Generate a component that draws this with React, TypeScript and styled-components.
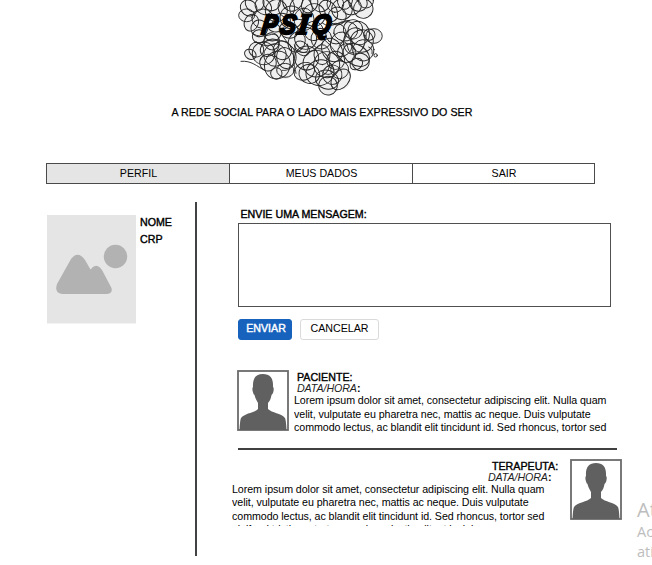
import React from 'react';
import styled, { createGlobalStyle } from 'styled-components';

const Global = createGlobalStyle`
  * { box-sizing: border-box; }
  html, body { margin: 0; background: #fff; overflow: hidden; }
  body { font-family: "Liberation Sans", Arial, sans-serif; font-size: 10.67px; color: #000; }
`;

const Page = styled.div`
  position: relative;
  width: 652px;
  height: 565px;
  overflow: hidden;
`;

const Header = styled.header`
  display: flex;
  flex-direction: column;
  height: 163px;
`;

const Logo = styled.svg`
  display: block;
  margin-left: 226px;
`;

const Text = styled.span<{ $track?: number; $heavy?: number }>`
  display: block;
  white-space: nowrap;
  line-height: 14px;
  letter-spacing: ${(p) => p.$track ?? 0}px;
  -webkit-text-stroke: ${(p) => p.$heavy ?? 0}px currentColor;
`;

const Tagline = styled(Text)`
  margin: 5px 0 0 171.5px;
`;

const Nav = styled.nav`
  display: grid;
  grid-template-columns: 183px 183px 181px;
  width: 549px;
  height: 21px;
  margin-left: 46px;
  border: 1px solid #4a4a4a;
`;

const Tab = styled.a<{ $active?: boolean }>`
  display: flex;
  align-items: center;
  justify-content: center;
  padding: 0 0 1px 1px;
  background: ${(p) => (p.$active ? '#e5e5e5' : '#fff')};
  border-right: 1px solid #4a4a4a;
  &:last-child { border-right: 0; }
`;

const Body = styled.main`
  display: grid;
  grid-template-columns: 148px 2px 1fr;
  margin: 18px 0 0 47px;
  height: 354px;
`;

const Profile = styled.aside`
  display: flex;
  gap: 4px;
  padding-top: 13px;
`;

const ProfileInfo = styled.div`
  display: flex;
  flex-direction: column;
  gap: 3px;
`;

const Rule = styled.div`
  background: #404244;
`;

const Content = styled.section`
  padding: 5px 0 0 41px;
`;

const FormLabel = styled(Text)`
  margin-left: 2.5px;
`;

const MessageBox = styled.div`
  width: 373px;
  height: 84px;
  margin-top: 2px;
  border: 1px solid #505050;
`;

const Actions = styled.div`
  display: flex;
  gap: 8px;
  margin-top: 12px;
`;

const Button = styled.button<{ $primary?: boolean }>`
  display: flex;
  align-items: center;
  justify-content: center;
  width: ${(p) => (p.$primary ? 54 : 79)}px;
  height: 21px;
  padding: 0 0 3px ${(p) => (p.$primary ? 2 : 0)}px;
  font: inherit;
  border-radius: 3px;
  color: ${(p) => (p.$primary ? '#fff' : '#000')};
  background: ${(p) => (p.$primary ? '#1762bd' : '#fff')};
  border: 1px solid ${(p) => (p.$primary ? '#1762bd' : '#dadada')};
`;

const Post = styled.article`
  display: flex;
  gap: 5px;
  height: 61px;
  margin: 30px 0 0 -1px;
`;

const Reply = styled.article`
  display: flex;
  gap: 12px;
  margin: 9px 0 0 -6px;
`;

const PostBody = styled.div<{ $right?: boolean }>`
  width: ${(p) => (p.$right ? '326px' : '330px')};
  height: ${(p) => (p.$right ? '66.5px' : '65px')};
  overflow: hidden;
`;

const PostHead = styled.div<{ $indent: number }>`
  padding: 0 0 0 ${(p) => p.$indent}px;
  height: 24px;
`;

const Stamp = styled(Text)<{ $shift?: number }>`
  margin: -3px 0 0 ${(p) => p.$shift ?? 0}px;
  color: #222;
  b { color: #000; }
`;

const Copy = styled.div<{ $nudge: number }>`
  padding-top: ${(p) => p.$nudge}px;
  ${Text} { line-height: 13.4px; }
`;

const Divider = styled.div`
  width: 379px;
  height: 2px;
  margin-top: 17px;
  background: #404040;
`;

const Notice = styled.div`
  position: absolute;
  left: 637px;
  top: 497px;
  font-family: "Open Sans", "Noto Sans", sans-serif;
  font-weight: 400;
  color: #bdbdbd;
  white-space: nowrap;
`;

const NoticeTitle = styled.div`
  font-size: 20px;
  line-height: 25px;
`;

const NoticeLine = styled.div`
  font-size: 14.5px;
  line-height: 20px;
`;

const circles: [number, number, number][] = [
  [62, 46, 24], [68, 24, 23], [86, 8, 28], [76, 68, 26], [100, 85, 25], [110, 56, 29],
  [112, 20, 27], [137, 6, 26], [151, 32, 33], [159, 68, 32], [139, 96, 27], [99, 109, 20],
  [181, 22, 31], [200, 2, 29], [196, 52, 34], [188, 91, 29], [225, 25, 34], [234, 58, 30],
  [251, 12, 28], [264, 45, 34], [284, 5, 30], [307, 33, 31], [328, 12, 25], [348, 28, 31],
  [377, 21, 29], [396, 8, 25], [412, 26, 29], [357, 0, 28], [334, 48, 27], [420, 4, 20],
  [73, 163, 18], [91, 149, 22], [113, 160, 34], [131, 143, 28], [147, 165, 34], [169, 151, 28],
  [178, 174, 32], [154, 195, 38], [126, 188, 25], [178, 211, 26], [151, 220, 17], [137, 124, 23],
  [212, 126, 31], [239, 115, 33], [263, 93, 29], [228, 145, 23], [286, 116, 31],
  [242, 174, 36], [235, 214, 32], [250, 222, 28], [271, 191, 40], [288, 164, 30], [302, 194, 39],
  [282, 218, 38], [303, 239, 35], [319, 224, 29], [341, 209, 27], [344, 238, 31], [306, 257, 28],
  [329, 181, 27], [318, 150, 37], [346, 133, 33], [330, 101, 31], [359, 94, 36],
  [381, 88, 29], [398, 99, 32], [385, 123, 40], [408, 123, 34], [412, 151, 32], [391, 165, 38],
  [362, 159, 28], [404, 186, 26], [391, 192, 20], [444, 108, 22], [430, 104, 17]
];

const Scribble = () => (
  <Logo width="170" height="100" viewBox="0 0 510 300">
    <g fill="#efefef">
      {circles.map(([cx, cy, r], i) => <circle key={i} cx={cx} cy={cy} r={r} />)}
    </g>
    <g fill="none" stroke="#262626" strokeWidth="2.8" strokeLinecap="round" strokeLinejoin="round">
      {circles.map(([cx, cy, r], i) => (
        <ellipse key={i} cx={cx} cy={cy} rx={r * (i % 4 === 1 ? 1.12 : 1)} ry={r * (i % 3 ? 1 : 0.8)} transform={`rotate(${i * 37} ${cx} ${cy})`} />
      ))}
      <path d="M45 184C77 181 92 199 116 211M428 141C447 147 432 166 441 162" />
      <circle cx="449" cy="166" r="5" />
      <path d="M78 100C117 125 143 86 157 112S103 145 91 125M205 135C216 168 258 164 244 132M339 137C375 98 354 172 385 156" />
      <path d="M108 128C152 108 197 125 208 158S190 215 169 211M205 150C198 190 208 205 210 220M296 120C325 143 337 178 361 190M290 70C318 90 340 60 371 61M165 100C192 143 214 160 240 157S282 138 292 124M312 190C341 215 306 238 285 212" />
    </g>
    <g transform="translate(104 102) skewX(-7)" fontFamily="Liberation Sans, Arial, sans-serif" fontSize="84" fontWeight="700" fontStyle="italic" stroke="#000" strokeWidth="6">
      <text textLength="48" lengthAdjust="spacingAndGlyphs">P</text>
      <text x="56" textLength="48" lengthAdjust="spacingAndGlyphs">S</text>
      <text x="110" fontFamily="DejaVu Serif, serif" fontSize="80" textLength="34" lengthAdjust="spacingAndGlyphs">I</text>
      <text x="150" textLength="58" lengthAdjust="spacingAndGlyphs">Q</text>
    </g>
  </Logo>
);

const Placeholder = () => (
  <svg width="89" height="109" viewBox="0 0 89 109">
    <path fill="#e5e5e5" d="M0 0H89V108.5H0z" />
    <circle cx="68.5" cy="41.5" r="11.7" fill="#b2b2b2" />
    <path fill="#b2b2b2" d="M15 79H59Q66 79 64.5 73L55 55Q49 47 43.500 54.500L38 45Q31 35 24 44L10 69Q7 78 15 79Z" />
  </svg>
);

const AvatarFrame = styled.svg`
  flex-shrink: 0;
`;

const Avatar = () => (
  <AvatarFrame width="52" height="61" viewBox="0 0 52 61">
    <rect x="1" y="1" width="50" height="59" fill="#fff" stroke="#6b6b6b" strokeWidth="1.8" />
    <path fill="#606060" d="M26 4C19 4 15.500 8 16 17C14.500 18 16 24 17.500 25C18.500 29 20 31 21 33V39C17 43 8 43 4 48Q3 50 2.500 60H49.500Q49 50 48 48C44 43 35 43 31 39V33C33 31 34 28 34.500 25C36.500 24 37.500 18 36 17C36.500 8 33 4 26 4Z" />
  </AvatarFrame>
);

const lorem = [
  'Lorem ipsum dolor sit amet, consectetur adipiscing elit. Nulla quam',
  'velit, vulputate eu pharetra nec, mattis ac neque. Duis vulputate',
  'commodo lectus, ac blandit elit tincidunt id. Sed rhoncus, tortor sed',
  'eleifend tristique, tortor mauris molestie elit, et lacinia'
];

const LoremCopy = ({ rows, nudge = 0 }: { rows: number; nudge?: number }) => (
  <Copy $nudge={nudge}>
    {lorem.slice(0, rows).map((l) => <Text key={l} $track={-0.058}>{l}</Text>)}
  </Copy>
);

export default function App() {
  return (
    <>
      <Global />
      <Page>
        <Header>
          <Scribble />
          <Tagline $heavy={0.25} $track={0.04}>A REDE SOCIAL PARA O LADO MAIS EXPRESSIVO DO SER</Tagline>
        </Header>
        <Nav>
          <Tab $active><Text>PERFIL</Text></Tab>
          <Tab><Text>MEUS DADOS</Text></Tab>
          <Tab><Text>SAIR</Text></Tab>
        </Nav>
        <Body>
          <Profile>
            <Placeholder />
            <ProfileInfo>
              <Text $heavy={0.4}>NOME</Text>
              <Text $heavy={0.4}>CRP</Text>
            </ProfileInfo>
          </Profile>
          <Rule />
          <Content>
            <FormLabel $heavy={0.4}>ENVIE UMA MENSAGEM:</FormLabel>
            <MessageBox />
            <Actions>
              <Button $primary><Text $heavy={0.4}>ENVIAR</Text></Button>
              <Button><Text>CANCELAR</Text></Button>
            </Actions>
            <Post>
              <Avatar />
              <PostBody>
                <PostHead $indent={3}>
                  <Text $heavy={0.4}>PACIENTE:</Text>
                  <Stamp $track={-0.08}><i>DATA/HORA</i><b>:</b></Stamp>
                </PostHead>
                <LoremCopy rows={3} nudge={0.3} />
              </PostBody>
            </Post>
            <Divider />
            <Reply>
              <PostBody $right>
                <PostHead $indent={260}>
                  <Text $heavy={0.4}>TERAPEUTA:</Text>
                  <Stamp $shift={-4} $track={-0.08}><i>DATA/HORA</i><b>:</b></Stamp>
                </PostHead>
                <LoremCopy rows={4} />
              </PostBody>
              <Avatar />
            </Reply>
          </Content>
        </Body>
        <Notice>
          <NoticeTitle>Ativar o Windows</NoticeTitle>
          <NoticeLine>Acesse Configurações para</NoticeLine>
          <NoticeLine>ativar o Windows.</NoticeLine>
        </Notice>
      </Page>
    </>
  );
}
